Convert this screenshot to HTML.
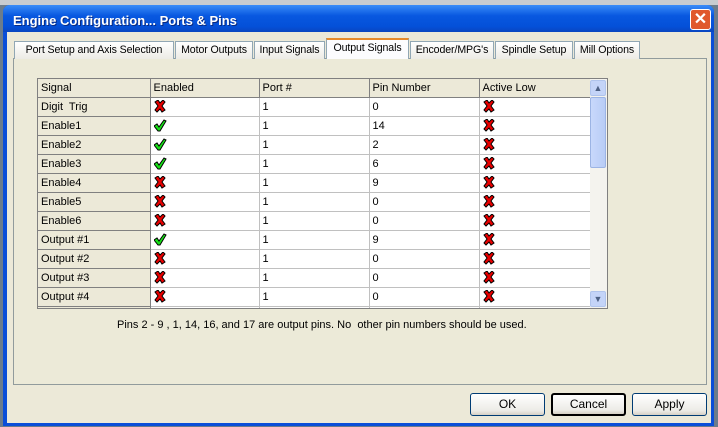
<!DOCTYPE html>
<html><head><meta charset="utf-8"><style>
*{margin:0;padding:0;box-sizing:border-box}
body{width:718px;height:427px;overflow:hidden;background:#6b7c8c;position:relative;font-family:Tahoma,"Liberation Sans",sans-serif;font-size:11px;color:#000}
.abs{position:absolute}
.win{left:3px;top:5px;width:711px;height:421px;background:#0a4ed8;border-radius:7px 7px 0 0}
.title{left:3px;top:5px;width:711px;height:27px;background:linear-gradient(#3a8cf8,#0858e0 40%,#0450d8 80%,#0a46c0);border-radius:7px 7px 0 0;color:#fff;font-weight:bold;font-size:13px;padding:8px 0 0 10px;text-shadow:1px 1px #0a2a80}
.client{left:7px;top:32px;width:704px;height:391px;background:#ece9d8}
.close{left:690px;top:9px;width:21px;height:21px;background:#e0582c;border:1px solid #fff;border-radius:3px;color:#fff;font-size:16px;font-weight:bold;text-align:center;line-height:19px}
.tab{top:41px;height:18px;border:1px solid #91a7b4;border-bottom:none;background:linear-gradient(#fff,#ecebe5);padding:2px 0 0 0;text-align:center;white-space:nowrap;font-size:10.6px;letter-spacing:-0.1px}
.panel{left:13px;top:58px;width:694px;height:327px;border:1px solid #919b9c;background:#ecead8}
.grid{left:37px;top:78px;width:571px;height:231px;border:1px solid #808080;background:#fff;overflow:hidden}
table{border-collapse:collapse;position:absolute;left:0;top:0}
td{height:19px;border-right:1px solid #c0c0c0;border-bottom:1px solid #c0c0c0;padding:0 0 0 3px;vertical-align:middle;white-space:nowrap}
td.h{background:#ece9d8;border-right:1px solid #808080;border-bottom:1px solid #808080}
tr.hd td{background:#ece9d8;border-bottom:1px solid #808080;border-right:1px solid #808080;height:18px}
.btn{top:393px;width:75px;height:23px;border:1px solid #003c74;border-radius:3px;background:linear-gradient(#fff,#ecebe6 80%,#d6d0c5);text-align:center;line-height:21px;font-size:12px}
svg{display:block}
</style></head><body>
<div class="abs" style="left:0;top:0;width:718px;height:5px;background:#c8ccd0"></div>
<div class="abs win"></div>
<div class="abs title">Engine Configuration... Ports &amp; Pins</div>
<div class="abs close">✕</div>
<div class="abs client"></div>
<div class="abs panel"></div>
<div class="abs tab" style="left:14px;width:160px">Port Setup and Axis Selection</div>
<div class="abs tab" style="left:175px;width:78px">Motor Outputs</div>
<div class="abs tab" style="left:254px;width:71px">Input Signals</div>
<div class="abs tab" style="left:326px;top:38px;height:21px;width:83px;background:#fcfcfe;border-top:2px solid #e68b2c">Output Signals</div>
<div class="abs tab" style="left:410px;width:84px">Encoder/MPG's</div>
<div class="abs tab" style="left:495px;width:78px">Spindle Setup</div>
<div class="abs tab" style="left:574px;width:66px">Mill Options</div>
<div class="abs grid">
<svg width="0" height="0" style="position:absolute"><defs>
<g id="x"><path d="M1 2 L4 0 L6 3 L9 0 L11 2 L8 6 L11 10 L8 12 L6 9 L3 12 L1 10 L4 6Z" fill="#e80000" stroke="#000" stroke-width="1"/></g>
<g id="c"><path d="M0 7 L3 5 L5 8 L10 1 L12 2 L6 12 L4 12Z" fill="#18e018" stroke="#000" stroke-width="1"/></g>
</defs></svg>
<table>
<tr class="hd"><td style="width:112px">Signal</td><td style="width:109px">Enabled</td><td style="width:110px">Port #</td><td style="width:110px">Pin Number</td><td style="width:111px">Active Low</td></tr>
<tr><td class="h">Digit&nbsp; Trig</td><td><svg width="13" height="13"><use href="#x"/></svg></td><td>1</td><td>0</td><td><svg width="13" height="13"><use href="#x"/></svg></td></tr>
<tr><td class="h">Enable1</td><td><svg width="13" height="13"><use href="#c"/></svg></td><td>1</td><td>14</td><td><svg width="13" height="13"><use href="#x"/></svg></td></tr>
<tr><td class="h">Enable2</td><td><svg width="13" height="13"><use href="#c"/></svg></td><td>1</td><td>2</td><td><svg width="13" height="13"><use href="#x"/></svg></td></tr>
<tr><td class="h">Enable3</td><td><svg width="13" height="13"><use href="#c"/></svg></td><td>1</td><td>6</td><td><svg width="13" height="13"><use href="#x"/></svg></td></tr>
<tr><td class="h">Enable4</td><td><svg width="13" height="13"><use href="#x"/></svg></td><td>1</td><td>9</td><td><svg width="13" height="13"><use href="#x"/></svg></td></tr>
<tr><td class="h">Enable5</td><td><svg width="13" height="13"><use href="#x"/></svg></td><td>1</td><td>0</td><td><svg width="13" height="13"><use href="#x"/></svg></td></tr>
<tr><td class="h">Enable6</td><td><svg width="13" height="13"><use href="#x"/></svg></td><td>1</td><td>0</td><td><svg width="13" height="13"><use href="#x"/></svg></td></tr>
<tr><td class="h">Output #1</td><td><svg width="13" height="13"><use href="#c"/></svg></td><td>1</td><td>9</td><td><svg width="13" height="13"><use href="#x"/></svg></td></tr>
<tr><td class="h">Output #2</td><td><svg width="13" height="13"><use href="#x"/></svg></td><td>1</td><td>0</td><td><svg width="13" height="13"><use href="#x"/></svg></td></tr>
<tr><td class="h">Output #3</td><td><svg width="13" height="13"><use href="#x"/></svg></td><td>1</td><td>0</td><td><svg width="13" height="13"><use href="#x"/></svg></td></tr>
<tr><td class="h">Output #4</td><td><svg width="13" height="13"><use href="#x"/></svg></td><td>1</td><td>0</td><td><svg width="13" height="13"><use href="#x"/></svg></td></tr>
<tr><td class="h"></td><td></td><td></td><td></td><td></td></tr>
</table>
<div class="abs" style="left:552px;top:0;width:17px;height:229px;background:#f4f3ee"></div>
<div class="abs" style="left:552px;top:1px;width:16px;height:16px;background:#c4d4f8;border:1px solid #b0c4ec;border-radius:2px;color:#4d6185;font-size:9px;text-align:center;line-height:14px">▲</div>
<div class="abs" style="left:552px;top:18px;width:16px;height:71px;background:linear-gradient(90deg,#c8d8fb,#b8ccf6);border:1px solid #9cb4e4;border-radius:2px"></div>
<div class="abs" style="left:552px;top:212px;width:16px;height:16px;background:#c4d4f8;border:1px solid #b0c4ec;border-radius:2px;color:#4d6185;font-size:9px;text-align:center;line-height:14px">▼</div>
</div>
<div class="abs" style="left:117px;top:319px;font-size:11px">Pins 2 - 9 , 1, 14, 16, and 17 are output pins. No&nbsp; other pin numbers should be used.</div>
<div class="abs btn" style="left:470px">OK</div>
<div class="abs btn" style="left:551px;border:2px solid #000;line-height:19px">Cancel</div>
<div class="abs btn" style="left:632px">Apply</div>
</body></html>
